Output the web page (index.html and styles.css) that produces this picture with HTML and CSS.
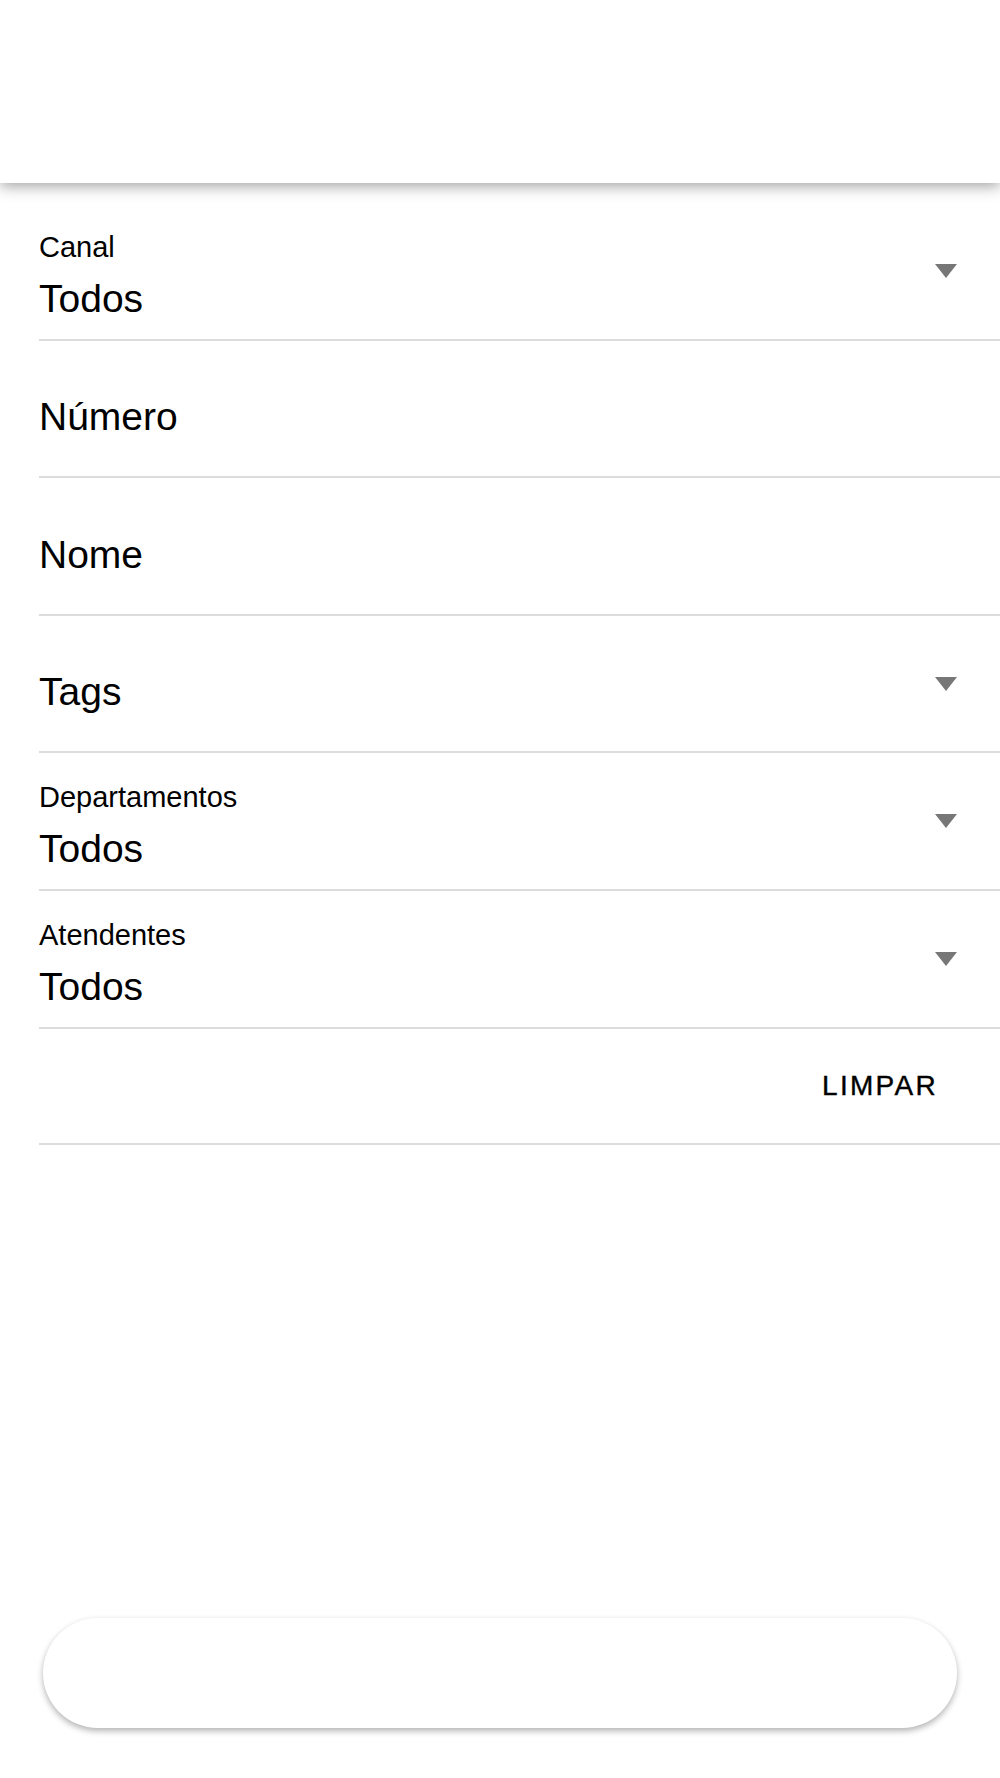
FILE: index.html
```html
<!DOCTYPE html>
<html lang="pt">
<head>
    <meta charset="UTF-8">
    <meta name="viewport" content="width=device-width, initial-scale=1.0">
    <title>Filtros</title>
    <link rel="stylesheet" href="styles.css">
</head>
<body>
    <header class="topbar"></header>
    <main class="filters">
        <div class="field">
            <div class="field-text">
                <div class="field-label">Canal</div>
                <div class="field-value">Todos</div>
            </div>
            <span class="caret"></span>
        </div>
        <div class="field">
            <div class="field-text empty">
                <div class="field-value">Número</div>
            </div>
        </div>
        <div class="field">
            <div class="field-text empty">
                <div class="field-value">Nome</div>
            </div>
        </div>
        <div class="field">
            <div class="field-text empty">
                <div class="field-value">Tags</div>
            </div>
            <span class="caret"></span>
        </div>
        <div class="field">
            <div class="field-text">
                <div class="field-label">Departamentos</div>
                <div class="field-value">Todos</div>
            </div>
            <span class="caret"></span>
        </div>
        <div class="field">
            <div class="field-text">
                <div class="field-label">Atendentes</div>
                <div class="field-value">Todos</div>
            </div>
            <span class="caret"></span>
        </div>
        <div class="actions">
            <button class="clear-btn">LIMPAR</button>
        </div>
    </main>
    <div class="bottom-pill"></div>
</body>
</html>
```

FILE: styles.css
```css
body {
    font-family: "Liberation Sans", Arial, sans-serif;
    margin: 0;
    padding: 0;
    background-color: #fff;
    color: #000;
    min-height: 100vh;
    display: flex;
    flex-direction: column;
}
.topbar {
    height: 183px;
    background-color: #fff;
    box-shadow: 0 3px 14px rgba(0, 0, 0, 0.38);
    position: relative;
    z-index: 1;
}
.filters {
    padding: 20px 0 0 39px;
}
.field {
    display: flex;
    align-items: center;
    height: 135.6px;
    border-bottom: 2px solid #dcdcdc;
}
.field-text {
    flex: 1;
    align-self: flex-start;
    padding-top: 30px;
}
.field-text.empty {
    padding-top: 56.5px;
}
.field-label {
    font-size: 29px;
    line-height: 29px;
    margin-bottom: 17px;
}
.field-value {
    font-size: 39px;
    line-height: 39px;
}
.caret {
    width: 0;
    height: 0;
    border-left: 11.5px solid transparent;
    border-right: 11.5px solid transparent;
    border-top: 14px solid #777;
    margin-right: 43px;
}
.actions {
    display: flex;
    justify-content: flex-end;
    align-items: center;
    height: 114.5px;
    border-bottom: 2px solid #dcdcdc;
}
.clear-btn {
    font-family: "Liberation Sans", Arial, sans-serif;
    font-size: 28px;
    line-height: 28px;
    letter-spacing: 2.3px;
    color: #000;
    background: none;
    border: none;
    padding: 0;
    margin-right: 62px;
    -webkit-text-stroke: 0.4px #000;
}
.bottom-pill {
    margin: auto 43px 50px;
    height: 110px;
    border-radius: 55px;
    background-color: #fff;
    box-shadow: 0 3px 6px rgba(0, 0, 0, 0.3);
}
```
